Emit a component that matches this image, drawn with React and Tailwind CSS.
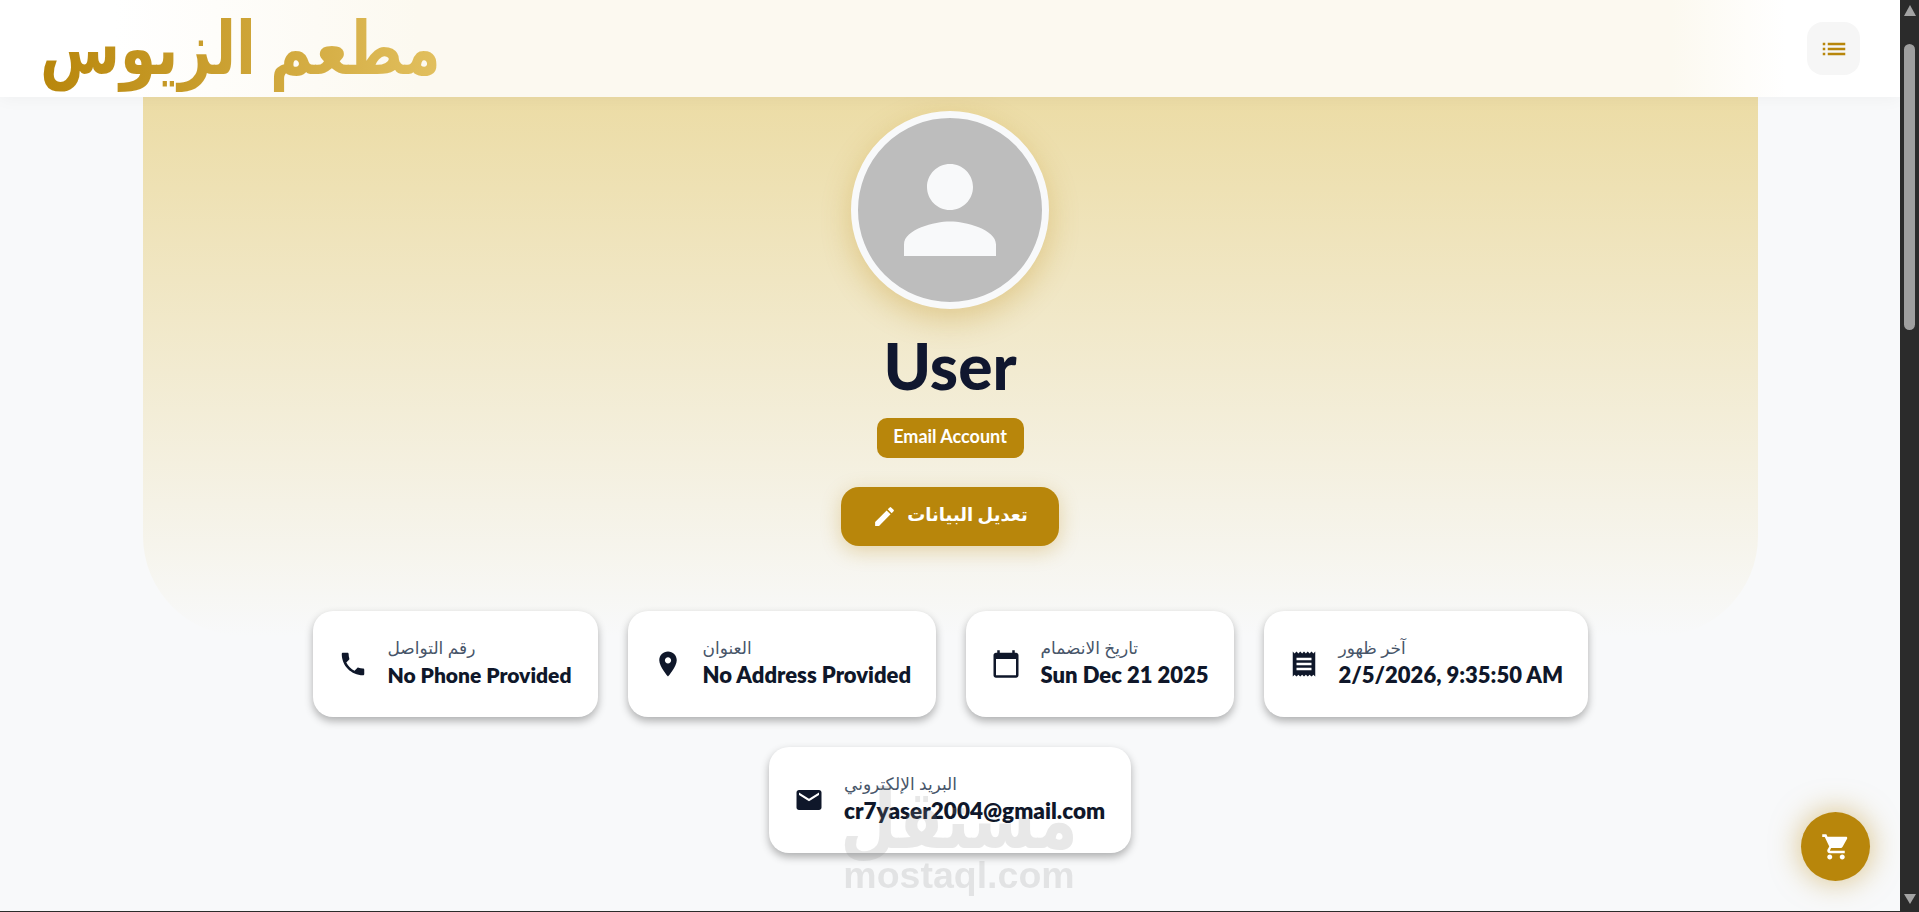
import React from "react";

const FONT = "font-['Lato','DejaVu_Sans',sans-serif]";

const icons = {
  list: "M3 13h2v-2H3v2zm0 4h2v-2H3v2zm0-8h2V7H3v2zm4 4h14v-2H7v2zm0 4h14v-2H7v2zM7 7v2h14V7H7z",
  person:
    "M12 12c2.21 0 4-1.79 4-4s-1.79-4-4-4-4 1.79-4 4 1.79 4 4 4zm0 2c-2.67 0-8 1.34-8 4v2h16v-2c0-2.66-5.33-4-8-4z",
  edit: "M3 17.25V21h3.75L17.81 9.94l-3.75-3.75L3 17.25zM20.71 7.04c.39-.39.39-1.02 0-1.41l-2.34-2.34a.9959.9959 0 0 0-1.41 0l-1.83 1.83 3.75 3.75 1.83-1.83z",
  call: "M6.62 10.79c1.44 2.83 3.76 5.14 6.59 6.59l2.2-2.2c.27-.27.67-.36 1.02-.24 1.12.37 2.33.57 3.57.57.55 0 1 .45 1 1V20c0 .55-.45 1-1 1-9.39 0-17-7.61-17-17 0-.55.45-1 1-1h3.5c.55 0 1 .45 1 1 0 1.25.2 2.45.57 3.57.11.35.03.74-.25 1.02l-2.2 2.2z",
  location:
    "M12 2C8.13 2 5 5.13 5 9c0 5.25 7 13 7 13s7-7.75 7-13c0-3.87-3.13-7-7-7zm0 9.5c-1.38 0-2.5-1.12-2.5-2.5s1.12-2.5 2.5-2.5 2.5 1.12 2.5 2.5-1.12 2.5-2.5 2.5z",
  calendar:
    "M20 3h-1V1h-2v2H7V1H5v2H4c-1.1 0-2 .9-2 2v16c0 1.1.9 2 2 2h16c1.1 0 2-.9 2-2V5c0-1.1-.9-2-2-2zm0 18H4V8h16v13z",
  receipt:
    "M18 17H6v-2h12v2zm0-4H6v-2h12v2zm0-4H6V7h12v2zM3 22l1.5-1.5L6 22l1.5-1.5L9 22l1.5-1.5L12 22l1.5-1.5L15 22l1.5-1.5L18 22l1.5-1.5L21 22V2l-1.5 1.5L18 2l-1.5 1.5L15 2l-1.5 1.5L12 2l-1.5 1.5L9 2 7.5 3.5 6 2 4.5 3.5 3 2v20z",
  mail: "M20 4H4c-1.1 0-1.99.9-1.99 2L2 18c0 1.1.9 2 2 2h16c1.1 0 2-.9 2-2V6c0-1.1-.9-2-2-2zm0 4l-8 5-8-5V6l8 5 8-5v2z",
  cart: "M7 18c-1.1 0-1.99.9-1.99 2S5.9 22 7 22s2-.9 2-2-.9-2-2-2zM1 2v2h2l3.6 7.59-1.35 2.45c-.16.28-.25.61-.25.96 0 1.1.9 2 2 2h12v-2H7.42c-.14 0-.25-.11-.25-.25l.03-.12.9-1.83h7.45c.75 0 1.41-.41 1.75-1.03l3.58-6.47c.08-.14.12-.31.12-.48 0-.55-.45-1-1-1H5.21l-.94-2H1zm16 16c-1.1 0-1.99.9-1.99 2s.89 2 1.99 2 2-.9 2-2-.9-2-2-2z",
};

function Icon({ name, className }) {
  return (
    <svg viewBox="0 0 24 24" fill="currentColor" className={className}>
      <path d={icons[name]} />
    </svg>
  );
}

const cards = [
  { icon: "call", label: "رقم التواصل", value: "No Phone Provided", width: "w-[285px]", size: "text-[21px]" },
  { icon: "location", label: "العنوان", value: "No Address Provided", width: "w-[308px]", size: "text-[22px]" },
  { icon: "calendar", label: "تاريخ الانضمام", value: "Sun Dec 21 2025", width: "w-[268px]", size: "text-[22px]" },
  { icon: "receipt", label: "آخر ظهور", value: "2/5/2026, 9:35:50 AM", width: "w-[324px]", size: "text-[22px]" },
  { icon: "mail", label: "البريد الإلكتروني", value: "cr7yaser2004@gmail.com", width: "w-[362px]", size: "text-[22.5px]" },
];

function InfoCard({ icon, label, value, width, size }) {
  return (
    <div
      className={`${width} flex h-[106px] items-center gap-5 rounded-[20px] bg-white px-[25px] shadow-[0_4px_8px_rgba(0,0,0,0.3)]`}
    >
      <Icon name={icon} className="h-[30px] w-[30px] shrink-0 text-[#0f172a]" />
      <div className="min-w-0 pb-[4px]">
        <p className="text-[17px] leading-[26px] text-[#475569]">{label}</p>
        <p className={`${size} whitespace-nowrap leading-[28px] font-extrabold text-[#0f172a]`}>
          {value}
        </p>
      </div>
    </div>
  );
}

function FakeScrollbar() {
  return (
    <div className="flex w-[19px] shrink-0 flex-col items-center bg-[#2b2b2b]">
      <div className="mt-[5px] h-0 w-0 border-x-[6.5px] border-b-[11px] border-x-transparent border-b-[#a3a3a3]" />
      <div className="mt-[28px] h-[286px] w-[11px] rounded-full bg-[#9f9f9f]" />
      <div className="mt-auto mb-[8px] h-0 w-0 border-x-[6.5px] border-t-[10px] border-x-transparent border-t-[#a3a3a3]" />
    </div>
  );
}

export default function App() {
  return (
    <div className={`relative flex h-screen overflow-hidden bg-[#2b2b2b] ${FONT}`}>
      <div className="relative mb-px flex min-w-0 flex-1 flex-col overflow-hidden bg-[#f8f9fa]">
        {/* Header */}
        <header className="relative z-10 flex h-[97px] shrink-0 items-center justify-between bg-[linear-gradient(90deg,#ffffff_6%,#fcf9f0_22%,#fcf9f0_88%,#ffffff_94%)] px-[40px] shadow-[0_2px_16px_rgba(0,0,0,0.04)]">
          <h1
            dir="rtl"
            className="-mt-[6px] scale-y-[1.27] bg-[linear-gradient(90deg,#b8860b,#e2c05f)] bg-clip-text text-[58px] leading-[97px] font-bold whitespace-nowrap text-transparent"
          >
            مطعم الزيوس
          </h1>
          <button className="flex h-[53px] w-[53px] items-center justify-center rounded-2xl bg-[#f6f6f6] text-[#b8860b]">
            <Icon name="list" className="h-[30px] w-[30px]" />
          </button>
        </header>

        {/* Hero */}
        <section className="mx-auto flex h-[539px] w-[85%] shrink-0 flex-col items-center rounded-b-[100px] bg-linear-to-b from-[#ecdca5] to-[#f8f9fa] pt-[14px]">
          <div className="flex h-[198px] w-[198px] items-center justify-center rounded-full border-[7px] border-[#f8f9fa] bg-[#bdbdbd] text-[#f8f9fa] shadow-[0_10px_30px_rgba(184,134,11,0.3)]">
            <Icon name="person" className="h-[138px] w-[138px]" />
          </div>
          <h2 className="mt-[20px] text-[64px] leading-[74px] font-black text-[#10172f]">User</h2>
          <span className="mt-[15px] flex h-[40px] w-[147px] items-center justify-center rounded-[10px] bg-[#b8860b] pb-[4px] text-[18px] font-bold text-white">
            Email Account
          </span>
          <button
            dir="rtl"
            className="mt-[29px] flex h-[59px] w-[218px] items-center justify-center gap-[10px] rounded-[18px] bg-[#b8860b] pb-[4px] text-[18px] font-bold text-white shadow-[0_5px_20px_rgba(184,134,11,0.3)]"
          >
            تعديل البيانات
            <Icon name="edit" className="mt-[4px] h-[25px] w-[25px]" />
          </button>
        </section>

        {/* Info cards */}
        <div className="mx-auto -mt-[25px] flex w-[1400px] flex-wrap justify-center gap-[30px]">
          {cards.map((card) => (
            <InfoCard key={card.icon} {...card} />
          ))}
        </div>

        {/* Cart button */}
        <button className="absolute right-[30px] bottom-[30px] flex h-[69px] w-[69px] items-center justify-center rounded-full bg-[#b8860b] text-white shadow-[0_0_30px_rgba(184,134,11,0.5)]">
          <Icon name="cart" className="h-[30px] w-[30px]" />
        </button>

        {/* Watermark */}
        <div className="pointer-events-none absolute bottom-[16px] left-[843px] z-20 flex w-[232px] flex-col items-center text-[#8f8f8f] opacity-20">
          <span className="scale-y-[1.25] text-[65px] leading-[76px] font-bold">مستقل</span>
          <span className="font-['Liberation_Sans',sans-serif] text-[37.5px] leading-[40px] font-bold">
            mostaql.com
          </span>
        </div>
      </div>
      <FakeScrollbar />
    </div>
  );
}
